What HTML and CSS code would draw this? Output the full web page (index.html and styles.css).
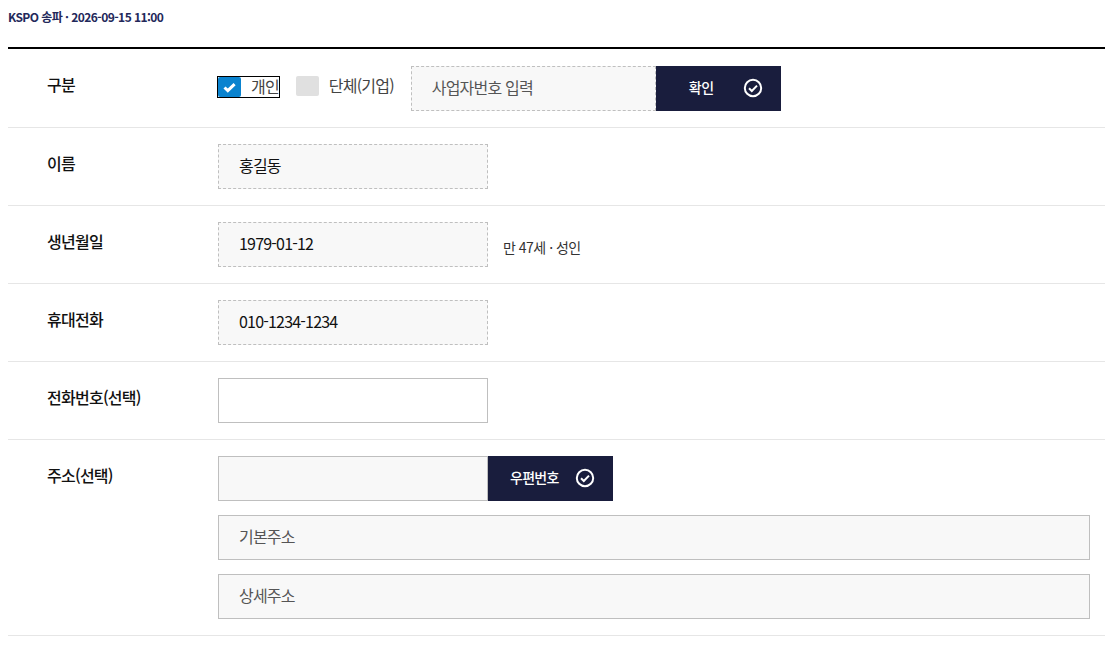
FILE: index.html
```html
<!DOCTYPE html>
<html lang="ko">
<head>
<meta charset="utf-8">
<title>KSPO</title>
<link rel="stylesheet" href="styles.css">
</head>
<body>
<p class="meta">KSPO 송파 · 2026-09-15 11:00</p>
<div class="form">
  <div class="row">
    <div class="label first">구분</div>
    <div class="field">
      <div class="line">
        <label class="check focus"><span class="box on"><svg width="13" height="11" viewBox="0 0 13 11"><path d="M1.5 5.5l3.3 3.1 6.8-6.4" fill="none" stroke="#fff" stroke-width="3"/></svg></span><span class="check-text">개인</span></label>
        <label class="check"><span class="box"></span><span class="check-text">단체(기업)</span></label>
        <div class="input dashed biz ph">사업자번호 입력</div>
        <button class="btn btn-confirm"><span>확인</span><svg class="ok" width="20" height="20" viewBox="0 0 20 20"><circle cx="10" cy="10" r="8.2" fill="none" stroke="#fff" stroke-width="2"/><path d="M6 10.2l2.8 2.8 5.2-5.4" fill="none" stroke="#fff" stroke-width="2"/></svg></button>
      </div>
    </div>
  </div>
  <div class="row">
    <div class="label">이름</div>
    <div class="field"><div class="line"><div class="input dashed short">홍길동</div></div></div>
  </div>
  <div class="row">
    <div class="label">생년월일</div>
    <div class="field"><div class="line"><div class="input dashed short">1979-01-12</div><span class="age">만 47세 · 성인</span></div></div>
  </div>
  <div class="row">
    <div class="label">휴대전화</div>
    <div class="field"><div class="line"><div class="input dashed short">010-1234-1234</div></div></div>
  </div>
  <div class="row">
    <div class="label">전화번호(선택)</div>
    <div class="field"><div class="line"><div class="input short blank"></div></div></div>
  </div>
  <div class="row last">
    <div class="label">주소(선택)</div>
    <div class="field stack">
      <div class="line"><div class="input short"></div><button class="btn btn-zip"><span>우편번호</span><svg class="ok" width="20" height="20" viewBox="0 0 20 20"><circle cx="10" cy="10" r="8.2" fill="none" stroke="#fff" stroke-width="2"/><path d="M6 10.2l2.8 2.8 5.2-5.4" fill="none" stroke="#fff" stroke-width="2"/></svg></button></div>
      <div class="input wide ph">기본주소</div>
      <div class="input wide ph">상세주소</div>
    </div>
  </div>
</div>
</body>
</html>
```
FILE: styles.css
```css
* { box-sizing: border-box; }
html, body { margin: 0; background: #fff; }
body {
  padding: 0 8px;
  font-family: "Noto Sans CJK KR", "Noto Sans", sans-serif;
  color: #111;
  overflow: hidden;
}
.meta {
  margin: 0;
  height: 47px;
  padding-top: 8px;
  font-size: 12px;
  line-height: 18px;
  font-weight: 700;
  letter-spacing: -0.56px;
  color: #23285a;
}
.form { border-top: 2px solid #000; }
.row {
  display: flex;
  padding: 16px 0;
  border-bottom: 1px solid #e6e6e6;
  min-height: 78px;
}
.row:first-child { padding-top: 17px; }
.label {
  width: 210px;
  padding-left: 39px;
  padding-top: 7px;
  font-size: 16px;
  line-height: 24px;
  font-weight: 500;
  letter-spacing: -0.75px;
  color: #111;
}
.label.first { padding-top: 6px; }
.field { flex: 1; }
.stack { display: flex; flex-direction: column; gap: 14px; padding-right: 15px; }
.line { display: flex; align-items: center; }
.input {
  height: 45px;
  padding: 0 20px;
  background: #f8f8f8;
  border: 1px solid #bfbfbf;
  font-size: 16px;
  line-height: 41px;
  letter-spacing: -0.8px;
  color: #111;
}
.dashed { border-style: dashed; }
.short { width: 270px; }
.blank { background: #fff; }
.biz { width: 245px; margin-left: 17px; }
.wide { width: 100%; }
.ph { color: #555; }
.check {
  display: flex;
  align-items: center;
  align-self: flex-start;
  margin-top: 10px;
  height: 20px;
  font-size: 16px;
  line-height: 18px;
  letter-spacing: -0.8px;
  color: #444;
}
.check-text { padding-bottom: 2px; }
.check.focus {
  outline: 1px solid #000;
  outline-offset: 0;
  margin-top: 11px;
  margin-right: 17px;
}
.box {
  width: 23px;
  height: 20px;
  margin-right: 10px;
  background: #e0e0e0;
  border-radius: 2px;
  display: flex;
  align-items: center;
  justify-content: center;
}
.box.on { background: #0a83cf; }
.btn {
  width: 125px;
  height: 45px;
  border: 0;
  background: #191d3d;
  color: #fff;
  font: 500 14px/20px "Noto Sans CJK KR", sans-serif;
  letter-spacing: -0.6px;
  display: flex;
  align-items: center;
  padding: 0 0 1px;
}
.btn span { position: relative; top: -1px; }
.btn-confirm span { margin-left: 33px; letter-spacing: -0.3px; }
.btn-confirm .ok { margin-left: 29px; }
.btn-zip span { margin-left: 22px; letter-spacing: -0.7px; }
.btn-zip .ok { margin-left: 16px; }
.age { margin-left: 15px; margin-top: 4px; font-size: 14px; letter-spacing: -0.5px; color: #333; }
```
